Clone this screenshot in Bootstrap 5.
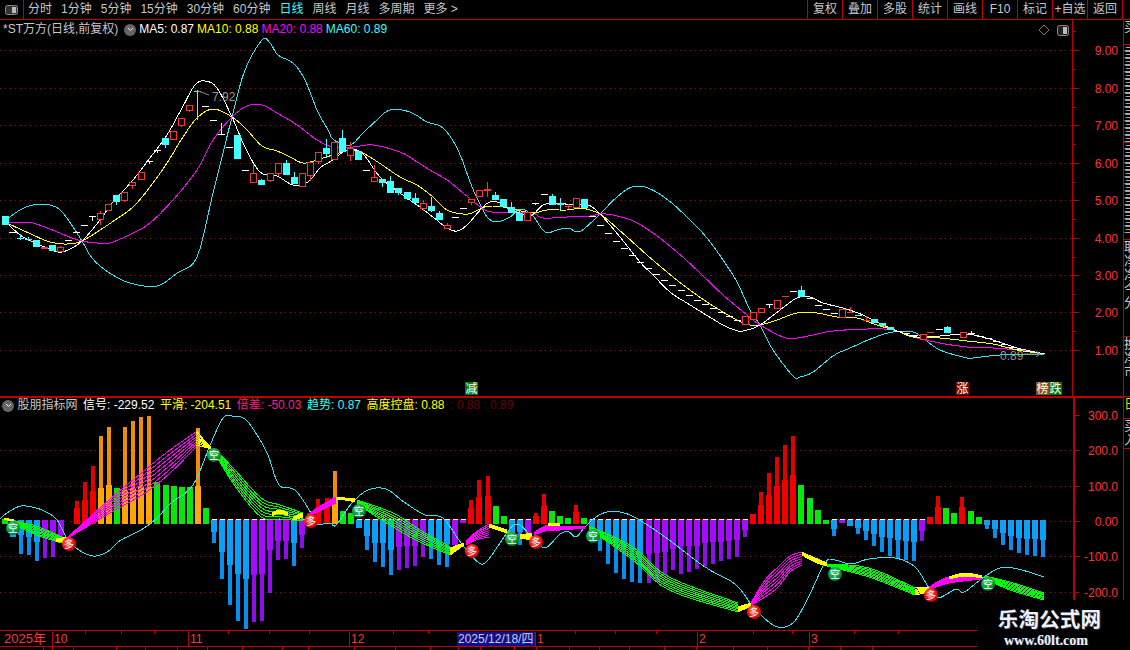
<!DOCTYPE html>
<html lang="zh">
<head>
  <meta charset="utf-8">
  <title>*ST万方 日线</title>
  <link href="https://cdn.jsdelivr.net/npm/bootstrap@5.3.0/dist/css/bootstrap.min.css" rel="stylesheet">
  <style>
    html, body {
      height: 650px;
      overflow: hidden;
      background: #000;
    }
    body, svg text {
      font-family: "Liberation Sans", "Noto Sans CJK SC", sans-serif;
      font-size: 12px;
      color: #c8c8c8;
    }
    .app { width: 1130px; height: 650px; position: relative; overflow: hidden; }

    .toolbar { height: 20px; border-bottom: 1px solid #c00000; line-height: 19px; }
    .tool-icon { width: 24px; border-right: 1px solid #c00000; }
    .tool-nav { gap: 9px; padding-left: 4px; }
    .tool-nav .on { color: #3ff; }
    .tool-btn { width: 35px; text-align: center; border-left: 1px solid #c00000; white-space: nowrap; }
    .tool-btns { padding-right: 7px; }
    .tool-btns .tool-btn:last-child { border-right: 1px solid #c00000; width: 36px; }

    .plots { width: 1123px; }
    .pane { position: relative; display: flex; }
    .pane-a { height: 378px; border-bottom: 2px solid #c00000; }
    .pane-b { height: 232px; }
    .pane svg { display: block; flex: none; }
    .legend {
      position: absolute;
      left: 3px;
      top: 2px;
      gap: 3px;
      white-space: nowrap;
      line-height: 15px;
    }
    .pane-b .legend { top: 0; left: 2px; gap: 5.5px; }
    .dot-btn {
      width: 12px; height: 12px;
      border-radius: 50%;
      background: #666;
      align-self: center;
    }
    .pane-a .dot-btn { margin-left: 3px; }
    .pane-b .dot-btn { margin-right: -2px; }
    .ma10 { color: #ff0; }
    .ma20 { color: #f0f; }
    .ma60 { color: #3ff; }
    .diff { color: #ff1a8c; }
    .dim { color: #600; }

    .strip { width: 7px; border-left: 1px solid #c00000; overflow: hidden; }
    .strip div { border-bottom: 1px solid #c00000; overflow: hidden; line-height: 14px; font-size: 13px; white-space: normal; width: 14px; }
    .strip .fine { line-height: 7px; font-size: 9px; }
    .strip .warn { color: #dd0; }

    .xaxis { height: 16px; border-top: 1px solid #c00000; position: relative; width: 1123px; }
    .xaxis span { position: absolute; top: 1px; color: #f33; line-height: 14px; padding-left: 1px; border-left: 1px solid #c00000; height: 15px; }
    .xaxis .yr { left: 3px; border: 0; font-size: 13px; }
    .xaxis .now { left: 457px; width: 78px; background: #10108c; color: #ccd; border: 0; padding-left: 1px; white-space: nowrap; overflow: hidden; }
    .xaxis i { position: absolute; top: 0; width: 1px; height: 3px; background: #c00000; }
    .tabs { height: 4px; border-top: 1px solid #c00000; position: relative; }
    .tabs i { position: absolute; top: 0; width: 1px; height: 4px; background: #c00000; }

    .stamp {
      position: absolute;
      left: 978px;
      top: 600px;
      width: 152px;
      height: 50px;
      background: #000;
      color: #eef3fb;
      text-align: center;
    }
    .stamp-cn { font: 700 20.5px/22px "Noto Sans CJK SC", sans-serif; padding: 7px 9px 0 0; letter-spacing: .2px; text-shadow: 1px 1px 0 #334; white-space: nowrap; }
    .stamp-en { font: 700 14px/16px "Liberation Serif", serif; padding: 4px 16px 0 0; text-shadow: 1px 0 0 #335; }
  </style>
</head>
<body>
  <div class="app d-flex flex-column">
    <div class="toolbar d-flex">
      <div class="tool-icon d-flex align-items-center justify-content-center">
        <svg width="13" height="10" viewBox="0 0 13 10"><rect x=".5" y=".5" width="12" height="9" rx="2" fill="#333" stroke="#888"/><rect x="7" y="2" width="4" height="6" fill="#bbb"/></svg>
      </div>
      <div class="tool-nav d-flex">
        <span>分时</span><span>1分钟</span><span>5分钟</span><span>15分钟</span><span>30分钟</span><span>60分钟</span>
        <span class="on">日线</span><span>周线</span><span>月线</span><span>多周期</span><span>更多 &gt;</span>
      </div>
      <div class="tool-btns d-flex ms-auto">
        <span class="tool-btn">复权</span><span class="tool-btn">叠加</span><span class="tool-btn">多股</span><span class="tool-btn">统计</span><span class="tool-btn">画线</span>
        <span class="tool-btn">F10</span><span class="tool-btn">标记</span><span class="tool-btn">+自选</span><span class="tool-btn">返回</span>
      </div>
    </div>

    <div class="d-flex flex-grow-1">
      <div class="plots">
        <div class="pane pane-a">
          <svg id="priceChart" width="1072" height="376" viewBox="0 20 1072 376"></svg>
          <svg id="priceAxis" width="51" height="376" viewBox="1072 20 51 376"></svg>
          <div class="legend d-flex">
            <span>*ST万方(日线,前复权)</span>
            <span class="dot-btn d-flex align-items-center justify-content-center">
              <svg width="7" height="5" viewBox="0 0 7 5"><path d="M1 1l2.5 2.5L6 1" fill="none" stroke="#eee"/></svg>
            </span>
            <span class="text-white">MA5: 0.87</span>
            <span class="ma10">MA10: 0.88</span>
            <span class="ma20">MA20: 0.88</span>
            <span class="ma60">MA60: 0.89</span>
          </div>
        </div>
        <div class="pane pane-b">
          <svg id="macdChart" width="1072" height="232" viewBox="0 398 1072 232"></svg>
          <svg id="macdAxis" width="51" height="232" viewBox="1072 398 51 232"></svg>
          <div class="legend d-flex">
            <span class="dot-btn d-flex align-items-center justify-content-center">
              <svg width="7" height="5" viewBox="0 0 7 5"><path d="M1 1l2.5 2.5L6 1" fill="none" stroke="#eee"/></svg>
            </span>
            <span>股朋指标网</span>
            <span class="text-white">信号: -229.52</span>
            <span class="ma10">平滑: -204.51</span>
            <span class="diff">倍差: -50.03</span>
            <span class="ma60">趋势: 0.87</span>
            <span class="ma10">高度控盘: 0.88</span>
            <span class="dim">: 0.88 : 0.89</span>
          </div>
        </div>
        <div class="xaxis" id="xAxis">
          <span class="yr">2025年</span>
          <span style="left:52px">10</span><span style="left:188px">11</span><span style="left:349px">12</span>
          <span class="now">2025/12/18/四</span>
          <span style="left:535px">1</span><span style="left:697px">2</span><span style="left:809px">3</span>
        </div>
        <div class="tabs" id="tabs"></div>
      </div>
      <div class="strip d-flex flex-column">
        <div style="height:25px">买</div>
        <div class="fine" style="height:98px">三三三三三三三三三三三三三三</div>
        <div class="fine" style="height:97px">三三三三三三三三三三三三三</div>
        <div style="height:97px">取净净今分</div>
        <div style="height:60px">换净市</div>
        <div class="warn" style="height:22px">日</div>
        <div style="height:30px">买入</div>
      </div>
    </div>

    <div class="stamp">
      <div class="stamp-cn">乐淘公式网</div>
      <div class="stamp-en">www.60lt.com</div>
    </div>
  </div>

  <script>
    // moving averages, page coordinates picked off the picture
    const ma5 = [[7,223],[20,235],[33,242],[47,248],[58,252],[68,250],[82,241],[100,220],[113,202],[133,180],[150,158],[167,135],[182,108],[195,85],[205,81],[217,88],[232,117],[245,147],[260,172],[277,176],[293,185],[308,182],[320,168],[333,160],[347,150],[362,153],[380,177],[400,193],[417,205],[433,217],[447,228],[457,231],[467,225],[482,208],[490,202],[500,203],[510,210],[520,213],[532,215],[543,205],[557,203],[573,205],[588,205],[600,214],[620,237],[640,262],[653,275],[670,292],[687,303],[703,313],[723,325],[738,331],[747,330],[760,325],[780,310],[797,298],[810,297],[823,303],[843,308],[863,315],[883,325],[900,332],[917,337],[940,336],[967,334],[993,340],[1017,348],[1045,354]];
    const ma10 = [[7,223],[33,235],[50,242],[67,244],[82,241],[100,230],[115,220],[133,207],[150,187],[167,163],[183,137],[197,118],[213,109],[232,117],[247,130],[262,146],[277,151],[290,157],[303,163],[317,160],[333,155],[353,150],[370,157],[400,177],[417,185],[433,197],[447,210],[463,214],[472,213],[482,208],[490,206],[503,207],[517,210],[533,213],[547,210],[567,210],[580,208],[590,210],[600,214],[610,222],[627,237],[647,255],[667,272],[687,288],[707,302],[723,312],[737,320],[750,325],[760,325],[777,320],[797,313],[817,313],[837,317],[857,318],[877,325],[900,332],[913,337],[940,338],[967,341],[993,344],[1017,350],[1045,354]];
    const ma20 = [[7,223],[20,222],[33,223],[50,229],[67,236],[82,241],[97,243],[110,243],[133,233],[150,223],[173,200],[197,170],[213,140],[232,117],[247,106],[262,105],[277,113],[297,125],[317,140],[333,147],[353,147],[373,145],[400,152],[417,162],[433,172],[447,180],[463,193],[482,208],[492,212],[517,212],[533,213],[543,218],[567,217],[590,216],[600,214],[613,215],[633,221],[653,233],[677,252],[700,273],[723,295],[747,315],[760,325],[783,337],[797,338],[813,335],[833,331],[867,329],[893,330],[913,337],[940,343],[967,347],[993,348],[1017,350],[1045,354]];
    const ma60 = [[7,219],[20,210],[33,205],[50,205],[63,213],[82,241],[92,258],[108,272],[130,283],[157,286],[177,273],[197,257],[213,193],[232,117],[245,70],[262,40],[270,43],[278,55],[293,63],[305,80],[317,110],[328,130],[334,140],[350,145],[363,133],[377,120],[390,110],[410,112],[427,122],[443,128],[458,150],[472,187],[482,208],[488,218],[497,222],[510,217],[520,209],[532,215],[545,232],[557,230],[568,228],[577,232],[585,228],[600,214],[617,197],[632,187],[648,188],[668,200],[690,220],[707,238],[723,260],[737,282],[750,310],[760,325],[773,350],[793,376],[800,377],[813,372],[833,356],[850,348],[873,338],[893,332],[913,332],[923,338],[940,350],[967,358],[973,358],[1000,355],[1045,354]];

    // kind, x, top, bottom, wick top, wick bottom
    const candles = [
      ['c',4.5,216,224,216,224],['d',12,232],['C',20,238,239,234,240],['C',28,239,240,237,241],['c',36,240,246,240,247],['R',44,247,249],
      ['c',52,245,250,245,251],['r',60,247,251,246,251],['d',68,240],['d',76,232],['d',84,225],['d',92,216,216,216,221],
      ['r',100,213,219,211,225],['r',108,204,210],['c',116,195,201,195,205],['r',124,192,200,192,202],['r',132,182,185,182,189],
      ['r',141,172,179,172,180],['d',149,161,161,161,164],['d',157,150,150,150,153],['c',165,138,144,138,148],['r',173,131,139,131,140],
      ['r',181,118,125,118,127],['r',189,105,110,105,112],['C',197,91,92,90,120],['d',205,106],['d',213,120],['d',221,134,134,123,134],
      ['d',229,147],['c',237,135,158],['d',245,170],['r',253,173,182,164,182],['c',261,180,184,179,184],['r',270,173,180,173,182],
      ['r',278,163,173,163,176],['c',286,163,174,160,174],['c',294,177,183,172,183],['r',302,173,186],['r',310,162,175,162,181],
      ['r',318,152,161,152,164],['c',326,148,153,139,158],['r',334,142,159],['c',342,138,151,130,151],['r',350,148,155,142,161],
      ['c',358,151,159],['d',366,170],['r',374,177,181,165,181],['c',382,179,182,179,187],['c',390,181,192,176,192],['c',398,188,192,188,195],
      ['c',407,192,198,192,200],['c',415,198,202,193,202],['r',423,203,208,200,211],['c',431,206,210,197,212],['c',439,213,219,211,219],
      ['r',447,225,228,223,228],['d',455,217],['d',463,208],['r',471,199,202,199,205],['r',479,190,196],['R',487,189,191,182,197],
      ['c',495,195,199,192,199],['c',503,199,206],['c',511,207,212,202,212],['c',519,213,220,211,221],['r',527,212,220],['d',535,203,203,203,205],
      ['d',544,194],['c',552,196,204,194,204],['C',560,203,205,198,210],['R',568,206,207,204,209],['r',576,198,207],['c',584,199,207],
      ['d',592,216],['d',600,225],['d',608,233],['d',616,241],['d',624,248],['d',632,255],['d',640,262],['d',648,268],['d',656,274],
      ['d',664,280],['d',672,285],['d',681,290],['d',689,295],['d',697,300],['d',705,304],['d',713,308],['d',721,312],['d',729,316],['d',737,320],
      ['r',745,316,324],['r',753,312,319],['r',761,308,312],['d',769,304,304,304,308],['r',777,300,308],['R',785,296,297],['d',793,291],
      ['c',801,290,296,286,296],['d',810,298],['d',818,305],['d',826,309],['d',834,313],['r',842,309,317],['R',850,312,313,307,313],
      ['C',858,315,316],['R',866,320,321,316,321],['c',874,319,322],['c',882,323,325],['c',890,327,329],['d',898,331],['d',906,333],['d',914,335],
      ['r',923,334,339],['R',930,332,333],['d',939,329],['c',947,327,332,326,332],['d',955,334],['r',963,332,337],['d',971,333,333,331,335],
      ['d',980,336],['d',988,338],['d',996,341],['d',1004,344],['d',1012,347],['d',1020,349],['d',1028,351],['d',1036,352]
    ];

    // macd bars: colour, wide bar end, thin bar end. values are y-380 at 3x
    const bars = 'g418,b470,b465/523,b470/525,b487/543,p475/533,p470/530,p465/490,x,r385/362,r360/306,r332/258,o323/168,o315/141,g323,o330/141,o325/123,o322/111,o320/108,g306,g315,g318,g320,g320,o318/144,g384,b456/488,b515/597,b555/675,b582/722,b598/748,p585/725,p582/722,p510/640,p484/540,p484/537,b490/557,p465/503,r400,r385/358,r385/354,o360/273,g393,g398,b443,b468/510,b490/546,b490/561,b510/585,p500/570,p497/565,p497/558,p475/530,b480/538,b497/555,b492/560,p495,p430,r385/360,r352/300,r348/288,g378,g408,b460/495,b455/495,p460,r408/400,r378/342,g393,g408,g413,r395/375,g413,b450/470,b478/512,b478/552,b490/578,b500/597,b510/605,b522/608,p522/608,p520/605,p515/585,p508/570,p497/581,p497/575,p497/567,p490/558,p485/551,p485/543,p482/536,p480/530,p450/472,r403,r375/335,r345/279,r318/231,r300/195,r285/168,g315,g353,g390,g420,b447/467,p430,b437,b445/461,b453/480,b462/497,b470/515,b474/528,b480/538,b483/540,b485/543,p453/483,r412,r380/348,g384,g399,r380/350,g393,g410,b435/447,b447/473,b458/495,b468/510,b475/520,b477/525,b477/528,b480/530'.split(',');
    const barColor = {
      g: ['#08e808', '#08e808'], b: ['#0aa0f8', '#0a8cec'], p: ['#a50cff', '#8a10e6'],
      r: ['#f20000', '#e00000'], o: ['#ffa508', '#f08c08']
    };

    // ribbons: colour, then x, top y, bottom y
    const ribbons = [
      ['#0f0', [[14,521,524],[36,526,535],[62,537,543]]],
      ['#f0f', [[68,537,538],[110,499,513],[145,470,493],[170,450,473],[196,432,447]]],
      ['#0f0', [[214,448,452],[235,470,486],[261,498,517],[280,505,519],[303,513,521]]],
      ['#f0f', [[310,513,515],[322,505,510],[336,497,503]]],
      ['#0f0', [[357,500,504],[393,513,527],[420,530,542],[450,547,555]]],
      ['#f0f', [[466,541,545],[476,532,540],[489,524,537]]],
      ['#0f0', [[507,531,533],[518,535,538]]],
      ['#f0f', [[534,533,535],[545,526,531],[560,526,530],[585,526,528]]],
      ['#0f0', [[589,526,529],[633,547,560],[669,577,590],[738,603,612]]],
      ['#f0f', [[751,603,605],[765,580,597],[778,567,587],[790,556,572],[802,552,565]]],
      ['#0f0', [[827,564,566],[869,568,577],[915,588,595]]],
      ['#f0f', [[929,587,590],[949,577,583],[982,577,579]]],
      ['#0f0', [[984,576,578],[1010,582,590],[1044,593,600]]],
      ['#ff0', [[56,539,541],[68,537,543]]],
      ['#ff0', [[196,430,445],[204,440,447],[211,447,449]]],
      ['#ff0', [[4,518,519],[14,520,522]]],
      ['#ff0', [[272,513,516],[280,510,513],[288,513,516]]],
      ['#ff0', [[293,517,520],[303,513,517]]],
      ['#ff0', [[336,497,500],[345,498,500],[355,499,502]]],
      ['#ff0', [[450,548,555],[464,543,545]]],
      ['#ff0', [[489,524,527],[507,530,533]]],
      ['#ff0', [[520,535,538],[532,533,540]]],
      ['#ff0', [[548,523,525],[560,523,525]]],
      ['#ff0', [[738,607,612],[751,603,606]]],
      ['#ff0', [[802,552,555],[815,558,562],[827,563,566]]],
      ['#ff0', [[915,588,595],[929,587,592]]],
      ['#ff0', [[949,577,579],[965,573,576],[982,576,578]]]
    ];

    const trend = [[0,519],[7,513],[21,506],[36,508],[46,512],[57,520],[68,540],[79,550],[93,556],[107,552],[121,540],[141,530],[157,518],[171,503],[193,485],[211,443],[223,418],[232,416],[245,419],[257,435],[268,455],[279,485],[295,490],[311,513],[316,524],[330,523],[336,525],[352,503],[368,490],[386,489],[404,502],[425,515],[443,518],[461,543],[479,563],[488,560],[500,543],[516,524],[532,537],[545,548],[560,534],[569,532],[576,537],[585,527],[596,517],[607,512],[620,512],[636,518],[665,537],[705,567],[735,584],[751,604],[764,618],[778,627],[793,623],[807,600],[825,563],[835,560],[851,564],[869,559],[895,558],[915,567],[929,588],[938,598],[956,589],[964,592],[984,577],[1000,568],[1018,569],[1044,577]];

    const longs = [[69,544],[311,521],[472,551],[536,542],[754,612],[931,595]];
    const shorts = [[13,528],[214,455],[359,511],[512,539],[593,536],[835,574],[988,584]];

    function smooth(pts) {
      const out = [];
      for (let i = 0; i < pts.length - 1; i++) {
        const a = pts[Math.max(i - 1, 0)], b = pts[i], c = pts[i + 1], d = pts[Math.min(i + 2, pts.length - 1)];
        for (let s = 0; s < 5; s++) {
          const t = s / 5, t2 = t * t, t3 = t2 * t;
          const f = k => 0.5 * (2 * b[k] + (c[k] - a[k]) * t + (2 * a[k] - 5 * b[k] + 4 * c[k] - d[k]) * t2 + (3 * b[k] - a[k] - 3 * c[k] + d[k]) * t3);
          out.push(f(0).toFixed(1) + ',' + f(1).toFixed(1));
        }
      }
      out.push(pts[pts.length - 1].join(','));
      return out.join(' ');
    }
    const line = (pts, color) => `<polyline points="${smooth(pts)}" fill="none" stroke="${color}" shape-rendering="crispEdges"/>`;
    const rect = (x, y, w, h, color) => `<rect x="${x}" y="${y}" width="${w}" height="${h}" fill="${color}" shape-rendering="crispEdges"/>`;
    const grid = (y, x2) => `<line x1="0" x2="${x2}" y1="${y}" y2="${y}" stroke="#b00000" stroke-dasharray="1 4" shape-rendering="crispEdges"/>`;

    function drawCandle(c) {
      const [kind, x, y1, y2, w1, w2] = c;
      const px = Math.round(x);
      const wickTop = w1 ?? y1, wickBot = w2 ?? (y2 ?? y1);
      if (kind === 'd') {
        return rect(px - 3, y1, 7, 1, '#fff') + (wickBot > wickTop ? rect(px, wickTop, 1, wickBot - wickTop, '#fff') : '');
      }
      const color = kind === 'c' || kind === 'C' ? '#4ff' : '#f33';
      let s = wickBot > wickTop ? rect(px, wickTop, 1, wickBot - wickTop, color) : '';
      if (kind === 'r') {
        s += `<rect x="${px - 3 + .5}" y="${y1 + .5}" width="6" height="${y2 - y1}" fill="#000" stroke="${color}" shape-rendering="crispEdges"/>`;
      } else if (kind === 'c') {
        s += rect(px - 3, y1, 7, y2 - y1 + 1, color);
      } else {
        s += rect(px - 3, y1, 7, Math.max(y2 - y1, 1), color);
      }
      return s;
    }

    function tag(x, y, text, bg) {
      return rect(x, y, 13, 13, bg) + `<text x="${x + .5}" y="${y + 11}" fill="#fff">${text}</text>`;
    }

    function drawPrice() {
      let s = '';
      [50, 88, 125, 163, 200, 238, 275, 312, 350].forEach(y => s += grid(y + .5, 1072));
      s += line(ma60, '#2fe6f2');
      s += line(ma20, '#f0f');
      s += line(ma10, '#ff0');
      s += line(ma5, '#fff');
      candles.forEach(c => s += drawCandle(c));
      // high and low labels
      s += `<path d="M198 91l11 4M1024 354h16l-4-3M1040 354l-4 3" fill="none" stroke="#888"/>`;
      s += `<text x="212" y="101" fill="#999">7.92</text><text x="1000" y="360" fill="#999">0.89</text>`;
      s += tag(465, 382, '减', '#0a760a') + tag(956, 382, '涨', '#780808') + tag(1036, 382, '榜', '#8c5010') + tag(1049, 382, '跌', '#0a760a');
      // little markers top right
      s += `<path d="M1044 25l5 5-5 5-5-5z" fill="none" stroke="#777"/>`;
      s += `<rect x="1057.5" y="25.5" width="11" height="10" rx="2" fill="#222" stroke="#888"/>` + rect(1063, 27, 4, 7, '#bbb');
      document.getElementById('priceChart').innerHTML = s;
    }

    function axisTicks(major, minor) {
      let s = '';
      major.forEach(y => s += rect(1073, y, 6, 1, '#c00000'));
      minor.forEach(y => s += rect(1073, y, 3, 1, '#c00000'));
      return s;
    }

    function drawPriceAxis() {
      const ys = [50, 88, 125, 163, 200, 238, 275, 312, 350];
      let s = rect(1072, 20, 1, 376, '#c00000');
      s += axisTicks(ys, ys.map(y => y + 19).slice(0, 8).concat([31]));
      ys.forEach((y, i) => {
        s += `<text x="1118" y="${y + 5}" text-anchor="end" fill="#f33">${(9 - i).toFixed(2)}</text>`;
      });
      document.getElementById('priceAxis').innerHTML = s;
    }

    function drawMacd() {
      const base = 380 + 425 / 3;
      const toY = v => 380 + v / 3;
      let s = '';
      [450, 486, 521, 556, 592].forEach(y => s += grid(y + .5, 1072));
      // dark zero line and the white dashes sitting on it
      [[26,37],[44,57],[63,65],[73,92],[103,114]].forEach(r => {
        s += rect(Math.round(4.5 + 8.05 * r[0]) - 3, 519, Math.round(8.05 * (r[1] - r[0])) + 6, 1, '#a00000');
        for (let i = r[0]; i <= r[1]; i++) s += rect(Math.round(4.5 + 8.05 * i) - 2, 519, 5, 1, '#fff');
      });
      bars.forEach((b, i) => {
        if (b === 'x') return;
        const [head, thin] = b.slice(1).split('/').map(Number);
        const kind = b[0], col = barColor[kind], x = Math.round(4.5 + 8.05 * i);
        const up = head < 425;
        if (thin) {
          const t = toY(thin);
          s += rect(x - 2, up ? t : base, 4, up ? base - t : t - base, col[1]);
        }
        const w = toY(head);
        s += up ? rect(x - 3, w, 6, 523.5 - w, col[0]) : rect(x - 3, 520, 6, w - 520, col[0]);
      });
      s += line(trend, '#2fe6f2');
      ribbons.forEach(([color, pts]) => {
        for (let k = 0; k < 7; k++) {
          const t = k / 6;
          s += line(pts.map(p => [p[0], p[1] + (p[2] - p[1]) * t]), color);
        }
      });
      longs.forEach(p => s += `<circle cx="${p[0]}" cy="${p[1]}" r="7" fill="url(#longFill)"/><text x="${p[0]}" y="${p[1] + 4}" text-anchor="middle" fill="#fff" style="font-size:10px">多</text>`);
      shorts.forEach(p => s += `<circle cx="${p[0]}" cy="${p[1]}" r="7" fill="url(#shortFill)"/><text x="${p[0]}" y="${p[1] + 4}" text-anchor="middle" fill="#fff" style="font-size:10px">空</text>`);
      const defs = `<defs>
        <radialGradient id="longFill" cx=".4" cy=".35" r=".75"><stop offset="0" stop-color="#ff6a5a"/><stop offset=".6" stop-color="#f01010"/><stop offset="1" stop-color="#a00808"/></radialGradient>
        <radialGradient id="shortFill" cx=".4" cy=".35" r=".75"><stop offset="0" stop-color="#3ec86c"/><stop offset=".6" stop-color="#0c9a3c"/><stop offset="1" stop-color="#06602a"/></radialGradient>
      </defs>`;
      document.getElementById('macdChart').innerHTML = defs + s;
    }

    function drawMacdAxis() {
      const ys = [415, 450, 486, 521, 556, 592];
      const labels = ['300.0', '200.0', '100.0', '0.00', '-100.0', '-200.0'];
      let s = rect(1073, 398, 2, 232, '#c00000');
      s += axisTicks(ys, [433, 468, 503, 539, 574]);
      ys.forEach((y, i) => {
        s += `<text x="1118" y="${y + 5}" text-anchor="end" fill="#f33">${labels[i]}</text>`;
      });
      document.getElementById('macdAxis').innerHTML = s;
    }

    [85, 121, 154, 228, 269, 309, 393, 428, 575, 615, 656, 753, 792, 854, 898].forEach(x => {
      document.getElementById('xAxis').insertAdjacentHTML('beforeend', `<i style="left:${x}px"></i>`);
    });
    [43, 52, 73, 116, 145, 177, 207, 242, 282, 308, 354, 395, 430, 458, 480, 514, 536, 569, 599, 629, 664, 696, 733, 767, 808, 840, 872].forEach(x => {
      document.getElementById('tabs').insertAdjacentHTML('beforeend', `<i style="left:${x}px"></i>`);
    });

    drawPrice();
    drawPriceAxis();
    drawMacd();
    drawMacdAxis();
  </script>
  <script src="https://cdn.jsdelivr.net/npm/bootstrap@5.3.0/dist/js/bootstrap.bundle.min.js"></script>
</body>
</html>
